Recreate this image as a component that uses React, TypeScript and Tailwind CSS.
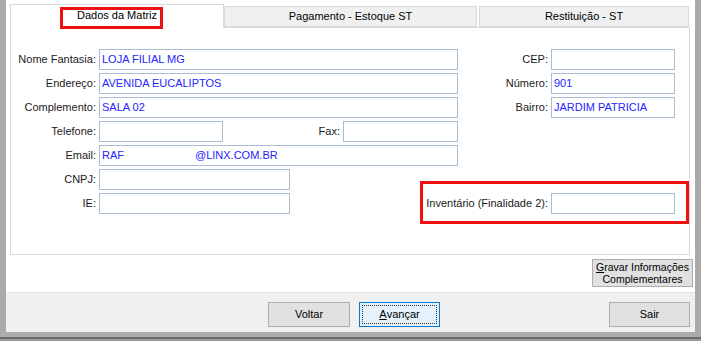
import type { ReactNode } from 'react';

const font = { fontFamily: '"Liberation Sans", Arial, sans-serif' };

function Label({ w, children }: { w: string; children: ReactNode }) {
  return <div className={`${w} shrink-0 text-right pr-[3px] text-[11px] text-[#1a1a1a] leading-none`}>{children}</div>;
}

function Field({ w, value }: { w: string; value?: ReactNode }) {
  return (
    <div className={`${w} h-[21px] shrink-0 border border-[#a9bdd3] bg-white flex items-center pl-[2px] text-[11px] text-[#2424ff] leading-none whitespace-nowrap`}>
      {value}
    </div>
  );
}

export default function App() {
  return (
    <div className="w-[701px] h-[341px] flex flex-col bg-white overflow-hidden" style={font}>
      <div className="flex h-[332px]">
        <div className="w-[6px] bg-[#ababab]" />
        <div className="flex-1 flex flex-col">
          {/* tabs */}
          <div className="flex items-end h-[24px] mt-[4px] ml-[4px] relative z-10">
            <div className="relative w-[214px] h-[24px] bg-white border border-b-0 border-[#d9d9d9] flex items-center justify-center text-[11px] text-black pb-[2px]">
              Dados da Matriz
              <div className="absolute left-[49px] top-[2px] w-[103px] h-[22px] border-[3px] border-[#ee1111]" />
            </div>
            <div className="w-[253px] h-[21px] mb-[1px] bg-[#f0f0f0] border border-[#d9d9d9] flex items-center justify-center text-[11px] text-black">
              Pagamento - Estoque ST
            </div>
            <div className="w-[210px] h-[21px] mb-[1px] ml-[2px] bg-[#f0f0f0] border border-[#d9d9d9] flex items-center justify-center text-[11px] text-black">
              Restituição - ST
            </div>
          </div>
          {/* panel */}
          <div className="relative -mt-px ml-[4px] mr-[5px] h-[228px] border border-[#d9d9d9] bg-white pt-[21px]">
            <div className="flex flex-col gap-[3px]">
              <div className="flex items-center">
                <Label w="w-[88px]">Nome Fantasia:</Label>
                <Field w="w-[359px]" value="LOJA FILIAL MG" />
                <Label w="w-[93px]">CEP:</Label>
                <Field w="w-[124px]" />
              </div>
              <div className="flex items-center">
                <Label w="w-[88px]">Endereço:</Label>
                <Field w="w-[359px]" value="AVENIDA EUCALIPTOS" />
                <Label w="w-[93px]">Número:</Label>
                <Field w="w-[124px]" value="901" />
              </div>
              <div className="flex items-center">
                <Label w="w-[88px]">Complemento:</Label>
                <Field w="w-[359px]" value="SALA 02" />
                <Label w="w-[93px]">Bairro:</Label>
                <Field w="w-[124px]" value="JARDIM PATRICIA" />
              </div>
              <div className="flex items-center">
                <Label w="w-[88px]">Telefone:</Label>
                <Field w="w-[124px]" />
                <Label w="w-[120px]">Fax:</Label>
                <Field w="w-[115px]" />
              </div>
              <div className="flex items-center">
                <Label w="w-[88px]">Email:</Label>
                <Field
                  w="w-[359px]"
                  value={
                    <>
                      <span>RAF</span>
                      <span className="ml-[71px]">@LINX.COM.BR</span>
                    </>
                  }
                />
              </div>
              <div className="flex items-center">
                <Label w="w-[88px]">CNPJ:</Label>
                <Field w="w-[191px]" />
              </div>
              <div className="flex items-center">
                <Label w="w-[88px]">IE:</Label>
                <Field w="w-[191px]" />
                <Label w="w-[261px]">Inventário (Finalidade 2):</Label>
                <Field w="w-[124px]" />
              </div>
            </div>
            <div className="absolute left-[409px] top-[153px] w-[269px] h-[43px] border-[3px] border-[#ee1111]" />
          </div>
          {/* gravar */}
          <div className="h-[37px] flex justify-end items-start pt-[4px] pr-[2px]">
            <button className="w-[101px] h-[28px] bg-[#e1e1e1] border border-[#adadad] text-[10.5px] leading-[12px] text-black flex flex-col items-center justify-center">
              <span>
                <span className="underline">G</span>ravar Informações
              </span>
              <span>Complementares</span>
            </button>
          </div>
          {/* footer */}
          <div className="h-[40px] bg-[#f0f0f0] border-t border-[#e3e3e3] flex items-start pt-[9px]">
            <button className="ml-[262px] w-[82px] h-[25px] bg-[#e1e1e1] border border-[#adadad] text-[11px] text-black">
              Voltar
            </button>
            <button className="ml-[9px] w-[81px] h-[25px] bg-[#e5f1fb] border border-[#0078d7] p-[2px]">
              <span className="w-full h-full border border-dotted border-[#333] flex items-center justify-center text-[11px] text-black">
                <span className="underline">A</span>vançar
              </span>
            </button>
            <button className="ml-auto mr-[5px] w-[81px] h-[25px] bg-[#e1e1e1] border border-[#adadad] text-[11px] text-black">
              Sair
            </button>
          </div>
        </div>
        <div className="w-[6px] bg-[#ababab]" />
      </div>
      <div className="h-[9px] flex flex-col">
        <div className="h-[5px] bg-[#ababab]" />
        <div className="h-[2px] bg-[#6a6a6a]" />
        <div className="h-[2px] bg-[#9a9a9a]" />
      </div>
    </div>
  );
}
